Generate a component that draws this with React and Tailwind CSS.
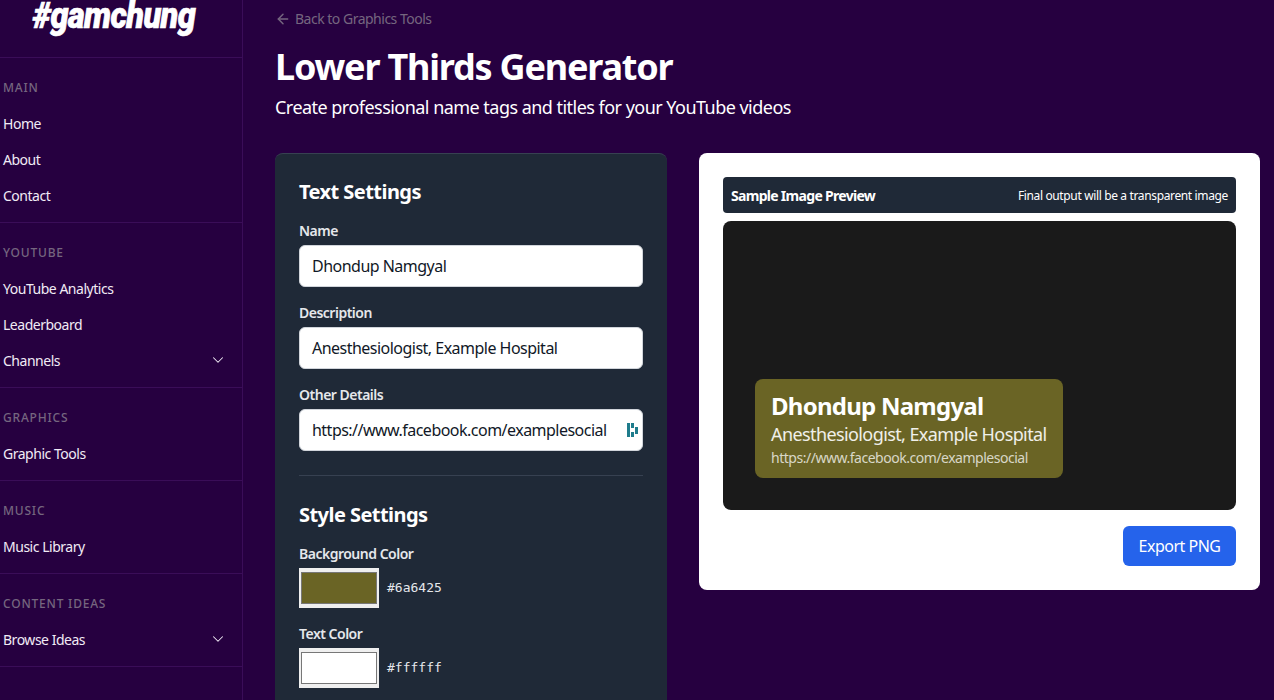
import React from "react";
import { ChevronDown, ArrowLeft } from "lucide-react";

function Section({ title, items }) {
  return (
    <div className="border-b border-[#3a0d58] pt-[22px] pb-[9px]">
      <div className="px-[3px] h-4 mb-[9px] text-[12px] leading-4 font-medium tracking-[0.8px] text-[#75667f]">{title}</div>
      {items.map((it) => (
        <div key={it.label} className="h-9 flex items-center justify-between pl-[3px] pr-[15px] text-[14px] text-[#f1ebf5] tracking-[-0.48px]">
          <span>{it.label}</span>
          {it.chev && <ChevronDown className="w-[18px] h-[18px]" strokeWidth={1.4} />}
        </div>
      ))}
    </div>
  );
}

function Field({ label, value, extra }) {
  return (
    <div className="mb-[16px]">
      <div className="text-[14px] leading-5 h-[24px] font-semibold text-[#e5e7eb] tracking-[-0.5px]">{label}</div>
      <div className="relative h-[42px] rounded-md border border-[#d1d5db] bg-white px-3 flex items-center text-[16px] text-[#111827] tracking-[-0.52px] whitespace-nowrap">
        {value}
        {extra && (
          <svg className="absolute left-[327px] top-[13px]" width="12" height="14" viewBox="0 0 12 14">
            <rect x="0" y="0" width="3" height="14" fill="#1f7c8c" />
            <rect x="4" y="0" width="3" height="5" fill="#1f7c8c" />
            <rect x="4" y="9" width="3" height="5" fill="#1f7c8c" />
            <rect x="8" y="4" width="3" height="7" fill="#1f7c8c" />
          </svg>
        )}
      </div>
    </div>
  );
}

function Swatch({ label, value }) {
  return (
    <div className="mb-[16px]">
      <div className="text-[14px] leading-5 h-[24px] font-semibold text-[#e5e7eb] tracking-[-0.5px]">{label}</div>
      <div className="flex items-center gap-2">
        <input type="color" defaultValue={value} className="w-20 h-10 bg-[#efefef]" />
        <span className="text-[13px] text-[#e5e7eb] font-['DejaVu_Sans_Mono',monospace]">{value}</span>
      </div>
    </div>
  );
}

export default function App() {
  return (
    <div className="h-[700px] w-[1274px] overflow-hidden flex bg-[#260040] text-white font-['Noto_Sans',sans-serif]">
      <aside className="w-[243px] shrink-0 border-r border-[#3a0d58]">
        <div className="h-[58px] border-b border-[#3a0d58] flex justify-center overflow-hidden">
          <div className="text-[36px] leading-[32px] font-black italic text-white font-['Roboto',sans-serif] tracking-[-0.65px] scale-x-[0.9] pr-[15px] [-webkit-text-stroke:0.7px_white]">#gamchung</div>
        </div>
        <Section title="MAIN" items={[{ label: "Home" }, { label: "About" }, { label: "Contact" }]} />
        <Section title="YOUTUBE" items={[{ label: "YouTube Analytics" }, { label: "Leaderboard" }, { label: "Channels", chev: true }]} />
        <Section title="GRAPHICS" items={[{ label: "Graphic Tools" }]} />
        <Section title="MUSIC" items={[{ label: "Music Library" }]} />
        <Section title="CONTENT IDEAS" items={[{ label: "Browse Ideas", chev: true }]} />
      </aside>
      <main className="flex-1 pl-8 pr-[14px] min-w-0">
        <div className="h-[37px] flex items-center gap-[4px] text-[14px] text-[#75667f] tracking-[-0.5px]">
          <ArrowLeft className="w-[16px] h-[16px]" strokeWidth={2.2} />
          <span>Back to Graphics Tools</span>
        </div>
        <h1 className="mt-[10px] text-[36px] leading-[40px] font-bold tracking-[-1.2px] whitespace-nowrap">Lower Thirds Generator</h1>
        <p className="mt-[6px] text-[18px] leading-7 tracking-[-0.53px] whitespace-nowrap">Create professional name tags and titles for your YouTube videos</p>
        <div className="mt-[32px] grid grid-cols-[392px_561px] gap-8 items-start">
          <section className="rounded-lg bg-[#1f2937] p-6 border-t border-[#374151] h-[600px]">
            <h2 className="text-[20px] leading-7 h-[28px] mb-[15px] font-bold tracking-[-0.55px]">Text Settings</h2>
            <Field label="Name" value="Dhondup Namgyal" />
            <Field label="Description" value="Anesthesiologist, Example Hospital" />
            <Field label="Other Details" value="https://www.facebook.com/examplesocial" extra />
            <div className="border-t border-[#374151] mt-[24px] mb-[25px]" />
            <h2 className="text-[20px] leading-7 h-[28px] mb-[15px] font-bold tracking-[-0.55px]">Style Settings</h2>
            <Swatch label="Background Color" value="#6a6425" />
            <Swatch label="Text Color" value="#ffffff" />
          </section>
          <section className="rounded-lg bg-white p-6 h-[437px]">
            <div className="h-9 rounded bg-[#1f2937] flex items-center justify-between px-2">
              <span className="text-[14px] font-bold tracking-[-0.7px]">Sample Image Preview</span>
              <span className="text-[12px] tracking-[-0.36px] pt-[2px]">Final output will be a transparent image</span>
            </div>
            <div className="relative mt-2 h-[289px] rounded-lg bg-[#1a1a1a]">
              <div className="absolute left-8 bottom-8 w-[308px] h-[99px] rounded-lg bg-[#6a6425] px-4 pt-[11px] whitespace-nowrap">
                <div className="text-[24px] leading-[32px] font-bold tracking-[-0.75px]">Dhondup Namgyal</div>
                <div className="text-[18px] leading-[24px] text-white/90 tracking-[-0.6px]">Anesthesiologist, Example Hospital</div>
                <div className="text-[14px] leading-[20px] mt-[2px] text-white/75 tracking-[-0.48px]">https://www.facebook.com/examplesocial</div>
              </div>
            </div>
            <div className="mt-4 flex justify-end">
              <button className="h-10 w-[113px] rounded-md bg-[#2563eb] text-[16px] text-white tracking-[-0.5px]">Export PNG</button>
            </div>
          </section>
        </div>
      </main>
    </div>
  );
}
